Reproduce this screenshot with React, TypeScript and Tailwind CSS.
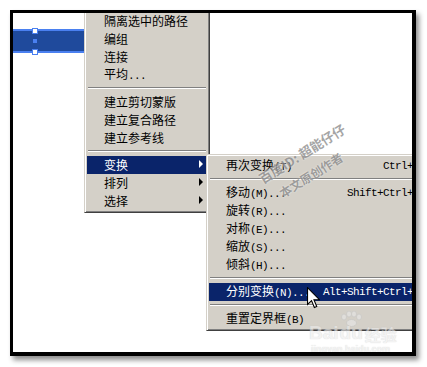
import React from "react";

const CJK = "font-['Noto_Sans_CJK_SC','Noto_Sans_CJK_JP',sans-serif]";

function Txt({ s }: { s: string }) {
  const parts = s.split(/([\x20-\x7E]+)/).filter((p) => p.length > 0);
  return (
    <>
      {parts.map((p, i) =>
        /^[\x20-\x7E]+$/.test(p) ? (
          <span
            key={i}
            className="font-['Liberation_Mono',monospace] text-[11px] tracking-[-0.6px] whitespace-pre"
          >
            {p}
          </span>
        ) : (
          <span key={i}>{p}</span>
        )
      )}
    </>
  );
}

function Item({
  label,
  arrow,
  active,
  shortcut,
}: {
  label: string;
  arrow?: boolean;
  active?: boolean;
  shortcut?: string;
}) {
  return (
    <div
      className={
        "h-[18px] flex items-center pl-[17px] pr-[4px] leading-[18px] whitespace-nowrap " +
        (active ? "bg-[#0a246a] text-white" : "text-black")
      }
    >
      <span className="flex-1">
        <Txt s={label} />
      </span>
      {shortcut && (
        <span className="font-['Liberation_Mono',monospace] text-[11px] tracking-[-0.6px] pr-[20px]">
          {shortcut}
        </span>
      )}
      {arrow && (
        <span
          className={
            "w-0 h-0 border-y-[4px] border-y-transparent border-l-[4px] mb-[2px] " +
            (active ? "border-l-white" : "border-l-black")
          }
        />
      )}
    </div>
  );
}

function Sep() {
  return (
    <div className="h-[9px] pt-[3px] px-[1px]">
      <div className="h-[2px] border-t border-t-[#808080] border-b border-b-white" />
    </div>
  );
}

const menuFrame =
  "absolute bg-[#d4d0c8] border border-t-[#d4d0c8] border-l-[#d4d0c8] border-r-[#404040] border-b-[#404040] shadow-[inset_1px_1px_0_#ffffff,inset_-1px_-1px_0_#808080] p-[2px] text-[12px] " +
  CJK;

function Cursor() {
  return (
    <svg
      className="absolute left-[294px] top-[274px]"
      width="13"
      height="22"
      viewBox="0 0 12 20"
    >
      <path
        d="M0.5 0.5 L0.5 16 L4.2 12.4 L6.8 18.8 L9 17.9 L6.4 11.6 L11.5 11.6 Z"
        fill="#ffffff"
        stroke="#000000"
        strokeWidth="1"
        strokeLinejoin="miter"
      />
    </svg>
  );
}

export default function App() {
  return (
    <div className="w-[427px] h-[367px] bg-white pt-[10px] pl-[10px]">
      <div className="relative w-[406px] h-[346px] border-solid border-black border-l-[3px] border-t-[3px] border-r-[4px] border-b-[4px] bg-white overflow-hidden shadow-[3px_4px_5px_rgba(0,0,0,0.45)]">
        {/* selected object */}
        <div className="absolute left-0 top-[16px] w-[71px] h-[24px] bg-[#1f4a9c] border-y-2 border-y-[#4a80f0]" />
        <div className="absolute left-[19px] top-[15px] w-[6px] h-[6px] bg-white border border-[#4a80f0]" />
        <div className="absolute left-[20px] top-[26px] w-[4px] h-[4px] bg-[#4a80f0]" />
        <div className="absolute left-[19px] top-[36px] w-[6px] h-[6px] bg-white border border-[#4a80f0]" />

        {/* main context menu */}
        <div className={menuFrame + " left-[71px] top-[-4px] w-[126px]"}>
          <Item label="隔离选中的路径" />
          <Item label="编组" />
          <Item label="连接" />
          <Item label="平均..." />
          <Sep />
          <Item label="建立剪切蒙版" />
          <Item label="建立复合路径" />
          <Item label="建立参考线" />
          <Sep />
          <Item label="变换" arrow active />
          <Item label="排列" arrow />
          <Item label="选择" arrow />
        </div>

        {/* submenu */}
        <div className={menuFrame + " left-[193px] top-[141px] w-[240px]"}>
          <Item label="再次变换(T)" shortcut="Ctrl+D" />
          <Sep />
          <Item label="移动(M)..." shortcut="Shift+Ctrl+M" />
          <Item label="旋转(R)..." />
          <Item label="对称(E)..." />
          <Item label="缩放(S)..." />
          <Item label="倾斜(H)..." />
          <Sep />
          <Item label="分别变换(N)..." shortcut="Alt+Shift+Ctrl+D" active />
          <Sep />
          <Item label="重置定界框(B)" />
        </div>

        {/* watermark */}
        <div
          className={
            "absolute left-[232px] top-[131px] w-[114px] text-center text-[13px] font-bold text-[#8f8f8f] opacity-80 rotate-[-32deg] whitespace-nowrap [text-shadow:0_0_2px_#ffffff] " +
            CJK
          }
        >
          百度ID: 超能仔仔
        </div>
        <div
          className={
            "absolute left-[258px] top-[153px] w-[80px] text-center text-[12px] font-bold text-[#8f8f8f] opacity-80 rotate-[-32deg] whitespace-nowrap [text-shadow:0_0_2px_#ffffff] " +
            CJK
          }
        >
          本文原创作者
        </div>

        {/* baidu jingyan logo */}
        <div className="absolute left-[296px] top-[298px] w-[100px] opacity-60">
          <svg className="absolute left-[30px] top-0" width="24" height="16" viewBox="0 0 24 16">
            <g fill="#e8e8e8" stroke="#c4c4c4" strokeWidth="0.8">
              <ellipse cx="5" cy="6" rx="2.5" ry="3" />
              <ellipse cx="10" cy="3" rx="2.5" ry="3" />
              <ellipse cx="15" cy="3" rx="2.5" ry="3" />
              <ellipse cx="20" cy="6" rx="2.5" ry="3" />
              <ellipse cx="12.5" cy="12" rx="5" ry="3.5" />
            </g>
          </svg>
          <div className="absolute left-0 top-[12px] flex items-end font-['Liberation_Sans',sans-serif] text-[19px] font-bold leading-none text-[#ececec] [text-shadow:0_0_1px_#b8b8b8]">
            <span>Bai</span>
            <span className="ml-[1px]">du</span>
            <span className={"ml-[2px] text-[16px] " + CJK}>经验</span>
          </div>
          <div className="absolute left-[2px] top-[34px] font-['Liberation_Sans',sans-serif] text-[9px] font-bold leading-none text-[#ececec] [text-shadow:0_0_1px_#bdbdbd]">
            jingyan.baidu.com
          </div>
        </div>

        <Cursor />
      </div>
    </div>
  );
}
